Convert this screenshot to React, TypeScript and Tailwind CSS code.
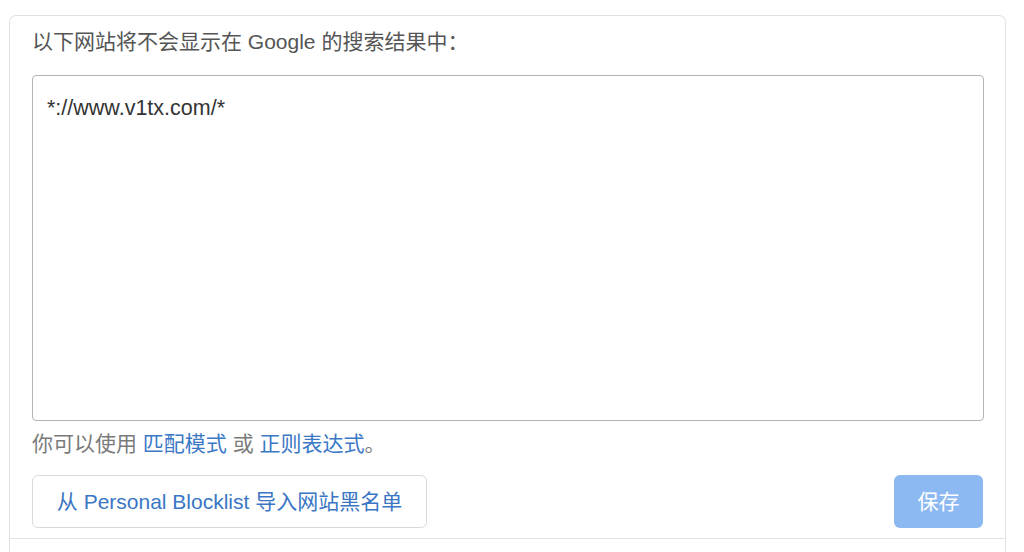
import React from 'react';

const font = { fontFamily: '"Liberation Sans", "Noto Sans CJK SC", sans-serif' };

export default function App() {
  return (
    <div className="min-h-screen bg-white pt-[15px] overflow-hidden" style={font}>
      <div className="ml-[9px] w-[997px] rounded-t-[7px] border border-b-0 border-[#e2e2e2]">
        <div className="px-[22px] pt-[12px] pb-[10px]">
          <p className="text-[21px] leading-[28px] text-[#555555]">以下网站将不会显示在 Google 的搜索结果中：</p>

          <textarea
            className="mt-[19px] block h-[346px] w-[952px] resize-none rounded-[4px] border border-[#b4b4b4] px-[14px] py-[18px] text-[21.5px] leading-[28px] text-[#333333] outline-none"
            defaultValue="*://www.v1tx.com/*"
            spellCheck={false}
            style={font}
          />

          <p className="mt-[9px] text-[21px] leading-[28px] text-[#7a7a7a]">
            你可以使用 <a className="text-[#3b78c6]">匹配模式</a> 或 <a className="text-[#3b78c6]">正则表达式</a>。
          </p>

          <div className="mt-[17px] flex items-center justify-between">
            <button className="h-[53px] w-[395px] rounded-[6px] border border-[#d9d9d9] bg-white text-[21px] text-[#3a76c4]" style={font}>
              从 Personal Blocklist 导入网站黑名单
            </button>
            <button className="h-[53px] w-[89px] rounded-[6px] bg-[#8cb9f1] text-[21px] text-white" style={font}>
              保存
            </button>
          </div>
        </div>
        <div className="h-[40px] border-t border-[#e2e2e2]"></div>
      </div>
    </div>
  );
}
